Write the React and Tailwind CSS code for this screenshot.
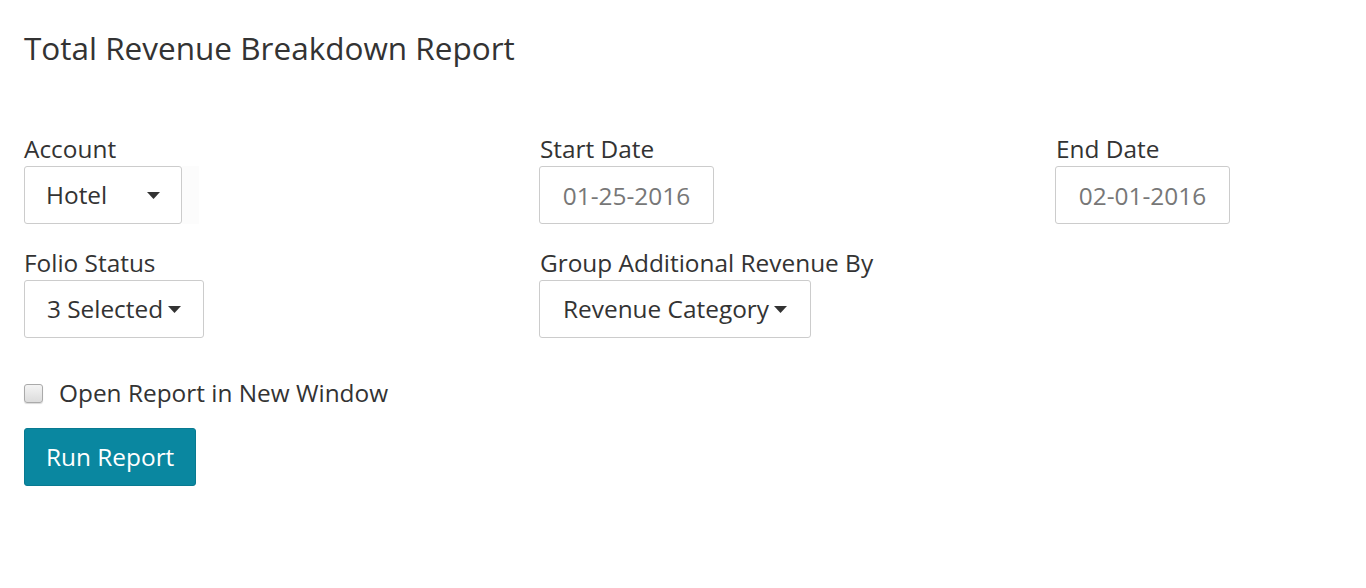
export default function App() {
  return (
    <div className="min-h-screen bg-white text-[#333] px-6" style={{ fontFamily: "'Open Sans', sans-serif" }}>
      <h1 className="pt-[28px] text-[31.5px] leading-[40px] font-normal">Total Revenue Breakdown Report</h1>

      <div className="mt-[66px] grid grid-cols-[516px_516px_1fr] gap-y-[24px] text-[24.4px]">
        {/* Account */}
        <div>
          <label className="block leading-[30px] mb-[2px]">Account</label>
          <div className="flex items-stretch">
            <button className="h-[58px] w-[158px] flex items-center justify-between pl-[21px] pr-[21px] border border-[#ccc] rounded-[3px] bg-white">
              <span>Hotel</span>
              <Caret />
            </button>
            <div className="w-[17px] h-[58px] bg-[#fcfcfc]" />
          </div>
        </div>

        {/* Start Date */}
        <div>
          <label className="block leading-[30px] mb-[2px]">Start Date</label>
          <input
            readOnly
            value="01-25-2016"
            className="-ml-px h-[58px] w-[175px] border border-[#ccc] rounded-[3px] text-center text-[#777] outline-none"
          />
        </div>

        {/* End Date */}
        <div>
          <label className="block leading-[30px] mb-[2px]">End Date</label>
          <input
            readOnly
            value="02-01-2016"
            className="-ml-px h-[58px] w-[175px] border border-[#ccc] rounded-[3px] text-center text-[#777] outline-none"
          />
        </div>

        {/* Folio Status */}
        <div>
          <label className="block leading-[30px] mb-[2px]">Folio Status</label>
          <button className="h-[58px] w-[180px] flex items-center justify-center gap-[5px] border border-[#ccc] rounded-[3px] bg-white">
            <span>3 Selected</span>
            <Caret />
          </button>
        </div>

        {/* Group Additional Revenue By */}
        <div>
          <label className="block leading-[30px] mb-[2px]">Group Additional Revenue By</label>
          <button className="-ml-px h-[58px] w-[272px] flex items-center justify-center gap-[5px] border border-[#ccc] rounded-[3px] bg-white">
            <span>Revenue Category</span>
            <Caret />
          </button>
        </div>
        <div />
      </div>

      <label className="mt-[40px] flex items-center gap-[16px] text-[24.4px] leading-[30px]">
        <span className="w-[19px] h-[19px] rounded-[3px] border border-[#aaa] bg-gradient-to-b from-[#f4f4f4] to-[#dcdcdc] shadow-[0_1px_1px_rgba(0,0,0,0.15)]" />
        <span>Open Report in New Window</span>
      </label>

      <button className="mt-[20px] h-[58px] px-[21px] rounded-[3px] bg-[#0a87a0] border border-[#087a91] text-white text-[24.4px]">
        Run Report
      </button>
    </div>
  );
}

function Caret() {
  return (
    <svg width="13" height="7" viewBox="0 0 13 7" className="shrink-0">
      <path d="M0 0h13L6.5 7z" fill="#333" />
    </svg>
  );
}
